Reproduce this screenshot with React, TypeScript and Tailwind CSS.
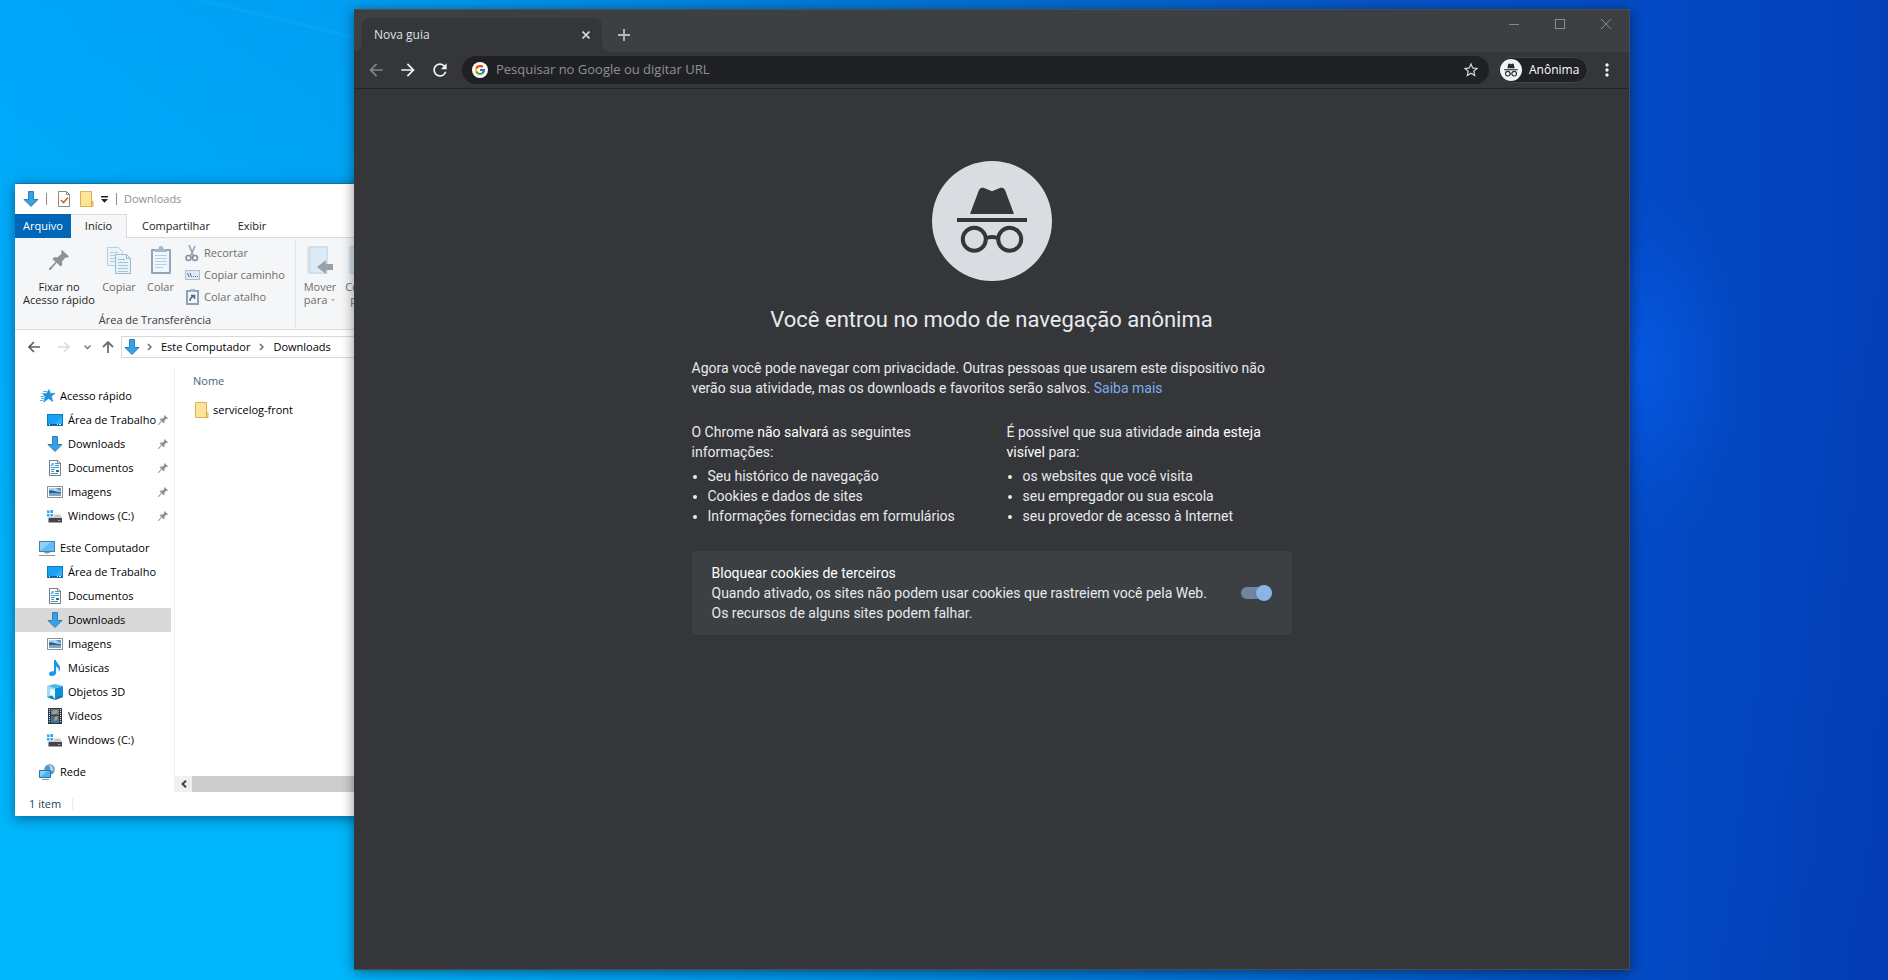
import React from "react";
import { FcGoogle } from "react-icons/fc";
import { MdArrowBack, MdArrowForward, MdRefresh, MdStarBorder, MdMoreVert } from "react-icons/md";

/* ---------- Desktop wallpaper ---------- */

function Wallpaper() {
  return (
    <svg className="absolute inset-0 h-full w-full" preserveAspectRatio="none" viewBox="0 0 1888 980" aria-hidden="true">
      <defs>
        <linearGradient id="base" x1="0" y1="0" x2="1" y2="0">
          <stop offset="0" stopColor="#00a6f9" />
          <stop offset="0.18" stopColor="#009ff3" />
          <stop offset="0.4" stopColor="#007fdc" />
          <stop offset="0.7" stopColor="#0558c8" />
          <stop offset="0.87" stopColor="#034ac4" />
          <stop offset="1" stopColor="#0340b8" />
        </linearGradient>
        <linearGradient id="low" x1="0" y1="0" x2="0" y2="1">
          <stop offset="0" stopColor="#00b6fb" stopOpacity="0" />
          <stop offset="0.8" stopColor="#00b6fb" stopOpacity="1" />
        </linearGradient>
        <linearGradient id="foot" x1="0" y1="0" x2="1" y2="0">
          <stop offset="0" stopColor="#00b2f9" />
          <stop offset="0.4" stopColor="#008fe4" />
          <stop offset="1" stopColor="#034ac2" />
        </linearGradient>
        <linearGradient id="rim" x1="0" y1="0" x2="1" y2="1">
          <stop offset="0.6" stopColor="#0338ae" stopOpacity="0" />
          <stop offset="1" stopColor="#0338ae" stopOpacity="0.5" />
        </linearGradient>
        <radialGradient id="glow">
          <stop offset="0" stopColor="#0559e2" />
          <stop offset="0.5" stopColor="#0553d8" stopOpacity="0.6" />
          <stop offset="1" stopColor="#034ec8" stopOpacity="0" />
        </radialGradient>
      </defs>
      <rect width="1888" height="980" fill="url(#base)" />
      <rect width="360" height="980" fill="url(#low)" />
      <rect x="360" y="900" width="1270" height="80" fill="url(#foot)" />
      <rect x="1620" width="268" height="980" fill="url(#rim)" />
      <ellipse cx="1636" cy="365" rx="120" ry="190" fill="url(#glow)" />
      <path d="M185 -2 L356 40 L356 36 L200 -2Z" fill="#18adfa" opacity="0.35" />
    </svg>
  );
}

/* ---------- Explorer icons ---------- */

function DownArrow() {
  return (
    <svg width="16" height="16" viewBox="0 0 16 16" className="shrink-0" aria-hidden="true">
      <path d="M5.500 .5h5v8h4.500L8 15.500 1 8.500h4.500z" fill="#39a0e4" stroke="#2c7fbd" />
    </svg>
  );
}

function FolderIcon() {
  return (
    <svg width="14" height="16" viewBox="0 0 14 16" className="shrink-0" aria-hidden="true">
      <path d="M.5 .5h11v9l1.500 1v5H.5z" fill="#fbe59b" stroke="#e3b04b" />
      <path d="M11.500 15.500v-5.500" fill="none" stroke="#e3a93f" />
    </svg>
  );
}

function StarIcon() {
  return (
    <svg width="16" height="16" viewBox="0 0 16 16" className="shrink-0" aria-hidden="true">
      <path d="M10 1.500l1.300 3.900H16l-3.700 2.800 1.500 5.300L9.500 10.400 4.700 14l1.600-5.400L4 5.700l3.800-.3z" fill="#1f93e0" stroke="#1b7fc8" strokeWidth=".6" />
      <path d="M4 3.500h4M2.500 5.500h4M1.500 8.500h4M2 10.500h3M1 12.500h3" stroke="#4bb5f3" />
    </svg>
  );
}

function DesktopIcon() {
  return (
    <svg width="16" height="16" viewBox="0 0 16 16" className="shrink-0" aria-hidden="true">
      <rect x=".5" y="2.500" width="15" height="11" fill="#19a0f0" stroke="#0b78bf" />
      <path d="M7 12L15 4v8z" fill="#30aef6" />
      <path d="M1 12.500h14" stroke="#0c5d95" />
      <path d="M2 12.500h1M10 12.500h1M12 12.500h2" stroke="#d6f0ff" />
    </svg>
  );
}

function DocumentIcon() {
  return (
    <svg width="16" height="16" viewBox="0 0 16 16" className="shrink-0" aria-hidden="true">
      <path d="M2.500 .5h8.500l2.500 2.500v12.500h-11z" fill="#fff" stroke="#7b8086" />
      <path d="M10.500 .5v3h3" fill="none" stroke="#7b8086" />
      <path d="M4 6l2-3v3M4 7.500h8M4 9.500h4M4 11.500h3M4 13.500h7" fill="none" stroke="#3a9bd9" />
      <path d="M8 3.500h2M8 5.500h4" stroke="#3a9bd9" />
      <rect x="9" y="10" width="3" height="2" fill="#2f6690" />
    </svg>
  );
}

function PictureIcon() {
  return (
    <svg width="16" height="16" viewBox="0 0 16 16" className="shrink-0" aria-hidden="true">
      <rect x=".5" y="2.500" width="15" height="11" fill="#fff" stroke="#8d9297" />
      <rect x="2" y="4" width="12" height="8" fill="#a9d3f0" />
      <path d="M9 4h5v3c-2 0-3-1-5-3z" fill="#4d9fdd" />
      <path d="M2 6.500c3-1 5 1.500 12 1.500v1.500H2z" fill="#345b80" />
      <path d="M2 9.500h12V12H2z" fill="#7fa6c6" />
    </svg>
  );
}

function DriveIcon() {
  return (
    <svg width="16" height="16" viewBox="0 0 16 16" className="shrink-0" aria-hidden="true">
      <path d="M0 2.500h2.500V5H0zM3.500 2H6v3H3.500zM0 6h2.500v2.500H0zM3.500 6H6v2.500H3.500z" fill="#1aabf2" />
      <path d="M7 6.500h6L15 10H1.500v-1H7z" fill="#c9cbcd" />
      <path d="M1.500 10H15v4.500H1.500z" fill="#414548" />
      <path d="M11 12.500h2.500" stroke="#9aa0a4" />
    </svg>
  );
}

function ComputerIcon() {
  return (
    <svg width="16" height="16" viewBox="0 0 16 16" className="shrink-0" aria-hidden="true">
      <rect x=".5" y="1.500" width="15" height="10" fill="#63bdf5" stroke="#3d84b8" />
      <path d="M1 11L12 2H1z" fill="#8ed2fb" />
      <path d="M5 12.500h6M0 15.500h16" stroke="#8e979e" />
      <path d="M7 13.500h2" stroke="#b8c0c5" />
    </svg>
  );
}

function MusicIcon() {
  return (
    <svg width="16" height="16" viewBox="0 0 16 16" className="shrink-0" aria-hidden="true">
      <path d="M7 0h2c.2 3 4.500 4.500 4 9-.1 1.200-.7 2-1.300 2.800.6-3-.7-4.300-2.700-5.300V13c0 2-2 3-3.800 3S2 15.200 2 13.700C2 12 4 10.800 7 11.300z" fill="#1499ec" />
    </svg>
  );
}

function CubeIcon() {
  return (
    <svg width="16" height="16" viewBox="0 0 16 16" className="shrink-0" aria-hidden="true">
      <path d="M0 2l8-2 8 2-8 2.500z" fill="#4fb7e8" />
      <path d="M0 2l8 2.500V16l-8-3z" fill="#9edcf5" />
      <path d="M16 2L8 4.500V16l8-3z" fill="#0f8fd6" />
      <path d="M3 5l5 1v7l-5-1.500z" fill="#e8f7fd" />
      <path d="M0 13l5-1.500 3 4.500zM16 13l-5-1.500L8 16z" fill="#2173b0" />
    </svg>
  );
}

function VideoIcon() {
  return (
    <svg width="16" height="16" viewBox="0 0 16 16" className="shrink-0" aria-hidden="true">
      <rect x="1" y="0" width="14" height="16" fill="#33373b" />
      <rect x="4" y="1" width="8" height="6" fill="#4d86ad" />
      <rect x="4" y="8" width="8" height="7" fill="#3576a8" />
      <path d="M5 4l4-2 2 1-1 2-4 1zM8 9l3-1-1 4-3 1z" fill="#d79a45" />
      <path d="M2.500 1v14M13.500 1v14" stroke="#e8eaec" strokeDasharray="1 1" />
    </svg>
  );
}

function NetworkIcon() {
  return (
    <svg width="16" height="16" viewBox="0 0 16 16" className="shrink-0" aria-hidden="true">
      <circle cx="10.500" cy="5.500" r="5.300" fill="#5b97c4" />
      <path d="M9 1c2 1 3 3 2 5l4 1-2-5z" fill="#b9dcf2" />
      <path d="M.5 6.500h11v7H.5z" fill="#4db2f0" stroke="#2877af" />
      <path d="M1 13l8-6H1z" fill="#83cdf8" />
      <path d="M3 15.500h7" stroke="#8e979e" />
    </svg>
  );
}

function PinIcon({ size }: { size: number }) {
  return (
    <svg width={size} height={size} viewBox="0 0 20 20" className="shrink-0" aria-hidden="true">
      <path d="M13 0l7 6.500-2 1.300-1.500-.3-3.500 4 .3 3.500-1.800 1.500-3.800-3.700L1.500 20 0 20v-1.500l6.500-6.400L3.500 9 5 7.200l3.700.1L12.800 3.500 12 1.500z" fill="#8b929b" />
    </svg>
  );
}

/* ---------- Explorer window ---------- */

type NavItem = { label: string; icon: React.ReactNode; pinned?: boolean; selected?: boolean };
type NavGroup = { label: string; icon: React.ReactNode; items: NavItem[] };

const navGroups: NavGroup[] = [
  {
    label: "Acesso rápido",
    icon: <StarIcon />,
    items: [
      { label: "Área de Trabalho", icon: <DesktopIcon />, pinned: true },
      { label: "Downloads", icon: <DownArrow />, pinned: true },
      { label: "Documentos", icon: <DocumentIcon />, pinned: true },
      { label: "Imagens", icon: <PictureIcon />, pinned: true },
      { label: "Windows (C:)", icon: <DriveIcon />, pinned: true },
    ],
  },
  {
    label: "Este Computador",
    icon: <ComputerIcon />,
    items: [
      { label: "Área de Trabalho", icon: <DesktopIcon /> },
      { label: "Documentos", icon: <DocumentIcon /> },
      { label: "Downloads", icon: <DownArrow />, selected: true },
      { label: "Imagens", icon: <PictureIcon /> },
      { label: "Músicas", icon: <MusicIcon /> },
      { label: "Objetos 3D", icon: <CubeIcon /> },
      { label: "Vídeos", icon: <VideoIcon /> },
      { label: "Windows (C:)", icon: <DriveIcon /> },
    ],
  },
  { label: "Rede", icon: <NetworkIcon />, items: [] },
];

function NavPane() {
  return (
    <nav className="w-[160px] shrink-0 space-y-2 border-r border-[#f0f0f0] pt-4 pr-[3px]">
      {navGroups.map((group) => (
        <div key={group.label}>
          <button className="flex h-6 w-full items-center gap-[5px] pl-6 text-left">
            {group.icon}
            {group.label}
          </button>
          {group.items.map((item) => (
            <button
              key={item.label}
              className={
                item.selected
                  ? "flex h-6 w-full items-center gap-[5px] bg-[#d9d9d9] pl-8 text-left"
                  : "flex h-6 w-full items-center gap-[5px] pl-8 text-left"
              }
            >
              {item.icon}
              <span className="min-w-0 flex-1 whitespace-nowrap">{item.label}</span>
              {item.pinned && (
                <span className="-ml-2 pr-[3px]">
                  <PinIcon size={10} />
                </span>
              )}
            </button>
          ))}
        </div>
      ))}
    </nav>
  );
}

function CopyArt() {
  return (
    <svg width="26" height="29" viewBox="0 0 26 29" aria-hidden="true">
      <path d="M1.500 1.500h11l4 4v14h-15z" fill="#eaf4fb" stroke="#b4cfe0" />
      <path d="M4 6.500h8M4 9.500h10M4 12.500h10M4 15.500h10" stroke="#b4cfe0" />
      <path d="M9.500 8.500h11l4 4v15h-15z" fill="#e6f3fb" stroke="#9fb9cc" />
      <path d="M20.500 8.500v4h4" fill="none" stroke="#9fb9cc" />
      <path d="M12 13.500h7M12 16.500h10M12 19.500h10M12 22.500h10M12 25.500h10" stroke="#a5c4d9" />
    </svg>
  );
}

function PasteArt() {
  return (
    <svg width="22" height="30" viewBox="0 0 22 30" aria-hidden="true">
      <rect x="1" y="4" width="20" height="25" rx="1" fill="#92a5b8" />
      <rect x="3" y="6" width="16" height="21" fill="#edf7fd" />
      <path d="M5 10.500h12M5 13.500h12M5 16.500h12M5 19.500h12M5 22.500h8" stroke="#b7cfdf" />
      <path d="M5 7V4h3.500c0-2 1-3 2.500-3s2.500 1 2.500 3H17v3z" fill="#a9b6c3" />
    </svg>
  );
}

function MoveArt() {
  return (
    <svg width="26" height="28" viewBox="0 0 26 28" aria-hidden="true">
      <path d="M0 0h21v28H0z" fill="#d6e5f0" />
      <path d="M3 1h17v26H3z" fill="#dcebf5" stroke="#c5d9e7" />
      <path d="M26 18v6h-7v4l-9-7 9-7v4z" fill="#9aa1a9" />
    </svg>
  );
}

function ScissorsArt() {
  return (
    <svg width="14" height="17" viewBox="0 0 14 17" fill="none" aria-hidden="true">
      <path d="M4 0l4.500 11M10 1L5.500 11" stroke="#98a3af" strokeWidth="1.600" />
      <circle cx="3.500" cy="13" r="2.500" stroke="#8791a0" strokeWidth="1.600" />
      <circle cx="10" cy="13" r="2.500" stroke="#8791a0" strokeWidth="1.600" />
    </svg>
  );
}

function PathArt() {
  return (
    <svg width="15" height="10" viewBox="0 0 15 10" fill="none" aria-hidden="true">
      <rect x=".5" y=".5" width="14" height="9" fill="#e0eaf4" stroke="#adc0d0" />
      <path d="M2.500 3l1.500 4M5 3l1.500 4M8 6.500h1M10 6.500h1M12 6.500h1" stroke="#5d6f80" />
    </svg>
  );
}

function ShortcutArt() {
  return (
    <svg width="13" height="16" viewBox="0 0 13 16" fill="none" aria-hidden="true">
      <rect x="1" y="2" width="11" height="13" fill="#edf6fc" stroke="#91a2b3" strokeWidth="2" />
      <path d="M4 0h5v3H4z" fill="#a9b6c3" />
      <path d="M4 12c0-3 1-4 4-5M5 6.500h3.500V10" stroke="#4e6882" strokeWidth="1.500" />
    </svg>
  );
}

function Ribbon() {
  return (
    <div className="flex h-[92px] border-b border-[#dadbdc] bg-[#f5f6f7] py-px text-[#6d6d6d]">
      <div className="flex w-[281px] shrink-0 flex-col border-r border-[#e2e3e4] pt-px">
        <div className="flex">
          <button className="flex w-[88px] flex-col items-center text-[#1f1f1f]">
            <span className="flex h-[40px] items-center">
              <PinIcon size={20} />
            </span>
            <span className="leading-[13px]">Fixar no<br />Acesso rápido</span>
          </button>
          <button className="flex w-[32px] flex-col items-center">
            <span className="flex h-[40px] items-center"><CopyArt /></span>
            <span className="leading-[13px]">Copiar</span>
          </button>
          <button className="ml-[7px] flex w-[37px] flex-col items-center">
            <span className="flex h-[40px] items-center"><PasteArt /></span>
            <span className="leading-[13px]">Colar</span>
          </button>
          <div className="ml-[5px] flex flex-col pt-[2px]">
            <button className="flex h-[22px] items-center gap-1">
              <span className="flex w-4 justify-center"><ScissorsArt /></span>
              Recortar
            </button>
            <button className="flex h-[22px] items-center gap-1 whitespace-nowrap">
              <span className="flex w-4 justify-center"><PathArt /></span>
              Copiar caminho
            </button>
            <button className="flex h-[22px] items-center gap-1">
              <span className="flex w-4 justify-center"><ShortcutArt /></span>
              Colar atalho
            </button>
          </div>
        </div>
        <div className="mt-auto text-center leading-4 text-[#3b3b3b]">Área de Transferência</div>
      </div>
      <button className="ml-[3px] flex w-[42px] shrink-0 flex-col items-center pt-px">
        <span className="flex h-[40px] items-center"><MoveArt /></span>
        <span className="leading-[13px]">
          Mover
          <br />
          para <svg width="6" height="4" className="inline pb-px" viewBox="0 0 6 4" aria-hidden="true"><path d="M0 0h6L3 3z" fill="#b5b5b5" /></svg>
        </span>
      </button>
      <button className="flex w-[42px] shrink-0 flex-col items-center pt-px">
        <span className="flex h-[40px] items-center"><MoveArt /></span>
        <span className="leading-[13px]">Copiar<br />para</span>
      </button>
    </div>
  );
}

function SmallChevron() {
  return (
    <svg width="5" height="8" viewBox="0 0 5 8" fill="none" aria-hidden="true">
      <path d="M1 1l3 3-3 3" stroke="#666" strokeWidth="1.400" />
    </svg>
  );
}

function Explorer() {
  return (
    <section
      aria-label="Explorador de Arquivos"
      className="absolute top-[183px] left-[15px] flex w-[400px] flex-col border-t border-[#1f6f9c] bg-white text-[11px] text-black shadow-[0_3px_12px_rgba(0,30,60,0.5)]"
    >
      <header className="flex h-[30px] items-center pl-2">
        <DownArrow />
        <span className="ml-[7px] h-3 w-px bg-[#8c8c8c]" />
        <button aria-label="Propriedades" className="ml-[10px]">
          <svg width="14" height="16" viewBox="0 0 14 16" fill="none" aria-hidden="true">
            <path d="M1.500 .5h8l3 3v12h-11z" fill="#fdfdfd" stroke="#87898c" />
            <path d="M9.500 .5v3h3" stroke="#87898c" />
            <path d="M4 9l2.500 2.500L11 6.500" stroke="#c56a2b" strokeWidth="1.600" />
          </svg>
        </button>
        <button aria-label="Nova pasta" className="ml-[9px]"><FolderIcon /></button>
        <button aria-label="Personalizar" className="ml-[7px]">
          <svg width="7" height="7" viewBox="0 0 7 7" aria-hidden="true">
            <path d="M0 0h7v1.500H0zM0 3h7L3.500 6.800z" fill="#222" />
          </svg>
        </button>
        <span className="ml-2 h-3 w-px bg-[#8c8c8c]" />
        <h2 className="ml-[7px] text-[#8f8f8f]">Downloads</h2>
      </header>

      <div className="flex h-6 items-stretch">
        <button className="w-[56px] bg-[#0066b8] text-white">Arquivo</button>
        <button className="w-[56px] border-t border-r border-[#dadbdc] bg-[#f5f6f7] text-[#222]">Início</button>
        <button className="w-[98px] border-b border-[#dadbdc] pt-px text-[#222]">Compartilhar</button>
        <button className="w-[54px] border-b border-[#dadbdc] pt-px text-[#222]">Exibir</button>
        <span className="flex-1 border-b border-[#dadbdc]" />
      </div>

      <Ribbon />

      <div className="flex h-[38px] items-start pt-[6px]">
        <div className="flex h-[22px] w-[106px] shrink-0 items-center pl-[13px]">
          <button aria-label="Voltar">
            <svg width="12" height="12" viewBox="0 0 12 12" fill="none" aria-hidden="true"><path d="M12 6H1M6 1L1 6l5 5" stroke="#5f5f63" strokeWidth="1.600" /></svg>
          </button>
          <button aria-label="Avançar" className="ml-[18px]">
            <svg width="12" height="12" viewBox="0 0 12 12" fill="none" aria-hidden="true"><path d="M0 6h11M6 1l5 5-5 5" stroke="#dcdcdc" strokeWidth="1.600" /></svg>
          </button>
          <button aria-label="Locais recentes" className="ml-[14px]">
            <svg width="7" height="5" viewBox="0 0 7 5" fill="none" aria-hidden="true"><path d="M.5 .5l3 3 3-3" stroke="#777" strokeWidth="1.400" /></svg>
          </button>
          <button aria-label="Acima" className="ml-[11px]">
            <svg width="12" height="12" viewBox="0 0 12 12" fill="none" aria-hidden="true"><path d="M6 12V1M1 6l5-5 5 5" stroke="#707074" strokeWidth="1.800" /></svg>
          </button>
        </div>
        <div className="flex h-[22px] flex-1 items-center border border-[#d9d9d9] pl-[2px]">
          <DownArrow />
          <span className="ml-[7px]"><SmallChevron /></span>
          <button className="ml-[9px] whitespace-nowrap">Este Computador</button>
          <span className="ml-[9px]"><SmallChevron /></span>
          <button className="ml-[9px]">Downloads</button>
        </div>
      </div>

      <div className="flex h-[424px]">
        <NavPane />
        <div className="flex flex-1 flex-col justify-between">
          <table className="mt-[3px] w-full border-collapse text-left">
            <thead>
              <tr className="h-5">
                <th className="py-0 pl-[18px] font-normal text-[#4c6077]">Nome</th>
              </tr>
            </thead>
            <tbody>
              <tr className="h-[38px]">
                <td className="py-0 pl-5">
                  <span className="flex items-center gap-1">
                    <FolderIcon />
                    servicelog-front
                  </span>
                </td>
              </tr>
            </tbody>
          </table>
          <div className="flex h-[16px]">
            <button aria-label="Rolar para a esquerda" className="flex w-[17px] items-center justify-center bg-[#f0f0f0]">
              <svg width="6" height="8" viewBox="0 0 6 8" fill="none" aria-hidden="true"><path d="M5 .7L1.500 4 5 7.300" stroke="#3f3f46" strokeWidth="2" /></svg>
            </button>
            <span className="flex-1 bg-[#cdcdcd]" />
          </div>
        </div>
      </div>

      <footer className="flex h-6 items-center pl-[14px] text-[#24405f]">
        1 item
        <span className="ml-[11px] h-3 w-px bg-[#ececec]" />
      </footer>
    </section>
  );
}

/* ---------- Browser window ---------- */

function Spy({ className }: { className: string }) {
  return (
    <svg viewBox="0 0 120 120" className={className} aria-hidden="true">
      <circle cx="60" cy="60" r="60" fill="currentColor" />
      <g fill="#35363a">
        <path d="M38 53L47 29Q48.300 26 51.500 26.800L60 30.200 68.500 26.800Q71.700 26 73 29L82 53z" />
        <path d="M25 57h70v4H25z" />
      </g>
      <g fill="none" stroke="#35363a" strokeWidth="4">
        <circle cx="42.300" cy="78.300" r="11.500" />
        <circle cx="77.700" cy="78.300" r="11.500" />
        <path d="M53 77.500Q60 74.500 67 77.500" />
      </g>
    </svg>
  );
}

function SmallSpy() {
  return (
    <svg viewBox="0 0 24 24" className="h-[22px] w-[22px] shrink-0" aria-hidden="true">
      <circle cx="12" cy="12" r="12" fill="#f1f3f4" />
      <path d="M8 10l1-4.500q.3-.8 1.200-.5l1.800.6 1.800-.6q.9-.3 1.200.5L16 10z" fill="#292a2d" />
      <path d="M4.500 11.700h15" stroke="#292a2d" strokeWidth="1.200" />
      <g fill="none" stroke="#292a2d" strokeWidth="1.100">
        <circle cx="8.500" cy="16" r="2.500" />
        <circle cx="15.500" cy="16" r="2.500" />
        <path d="M11 16h2" />
      </g>
    </svg>
  );
}

function TabStrip() {
  return (
    <div className="flex h-[42px] items-end bg-[#3c4043]">
      <div className="relative ml-2 flex h-[34px] w-[240px] items-center rounded-t-lg bg-[#35363a] pr-3 pl-3">
        <span className="absolute bottom-0 -left-2 h-2 w-2 bg-[radial-gradient(circle_at_0_0,transparent_7px,#35363a_8px)]" />
        <span className="absolute -right-2 bottom-0 h-2 w-2 bg-[radial-gradient(circle_at_100%_0,transparent_7px,#35363a_8px)]" />
        <span className="flex-1 text-[12px] text-[#dfe1e5]">Nova guia</span>
        <button aria-label="Fechar guia">
          <svg width="8" height="8" viewBox="0 0 8 8" aria-hidden="true"><path d="M.5 .5l7 7M7.500 .5l-7 7" stroke="#d3d5d8" strokeWidth="1.700" /></svg>
        </button>
      </div>
      <button aria-label="Nova guia" className="mb-[11px] ml-4">
        <svg width="12" height="12" viewBox="0 0 12 12" aria-hidden="true"><path d="M6 0v12M0 6h12" stroke="#b4b8bd" strokeWidth="1.800" /></svg>
      </button>
      <div className="mb-[23px] ml-auto flex items-center gap-[36px] pr-[18px]">
        <button aria-label="Minimizar">
          <svg width="10" height="10" viewBox="0 0 10 10" aria-hidden="true"><path d="M0 5.500h10" stroke="#85888c" /></svg>
        </button>
        <button aria-label="Maximizar">
          <svg width="10" height="10" viewBox="0 0 10 10" aria-hidden="true"><rect x=".5" y=".5" width="9" height="9" fill="none" stroke="#85888c" /></svg>
        </button>
        <button aria-label="Fechar">
          <svg width="10" height="10" viewBox="0 0 10 10" aria-hidden="true"><path d="M0 0l10 10M10 0L0 10" stroke="#85888c" /></svg>
        </button>
      </div>
    </div>
  );
}

function Toolbar() {
  return (
    <div className="flex h-[37px] items-center border-b border-[#242528] bg-[#35363a] pl-3 text-[#f1f3f4]">
      <div className="flex gap-3">
        <button aria-label="Voltar" className="text-[#83868b]"><MdArrowBack size={20} /></button>
        <button aria-label="Avançar"><MdArrowForward size={20} /></button>
        <button aria-label="Recarregar"><MdRefresh size={20} /></button>
      </div>
      <div className="ml-3 flex h-7 flex-1 items-center rounded-full bg-[#202124] pr-[9px] pl-[10px]">
        <span className="flex h-4 w-4 items-center justify-center rounded-full bg-white"><FcGoogle size={12} /></span>
        <input
          aria-label="Barra de endereço"
          placeholder="Pesquisar no Google ou digitar URL"
          className="ml-2 flex-1 bg-transparent text-[13px] outline-none placeholder:text-[#8f9095]"
        />
        <button aria-label="Adicionar aos favoritos" className="text-[#d5d7da]"><MdStarBorder size={18} /></button>
      </div>
      <button className="ml-[9px] flex h-[26px] w-[90px] items-center gap-[7px] rounded-full border border-[#414347] bg-[#202124] pl-px text-[12px] font-medium text-white">
        <SmallSpy />
        Anônima
      </button>
      <button aria-label="Menu" className="mr-3 ml-[9px]"><MdMoreVert size={20} /></button>
    </div>
  );
}

function IncognitoPage() {
  return (
    <main className="flex flex-1 flex-col items-center overflow-hidden bg-[#35363a] pt-[72px] font-[Roboto,sans-serif] text-[14px] leading-5 text-[#e8eaed]">
      <Spy className="h-[120px] w-[120px] text-[#d9dce1]" />
      <div className="w-full max-w-[600px]">
        <h1 className="mt-[25px] text-center text-[22px] leading-7">Você entrou no modo de navegação anônima</h1>
        <p className="mt-6">
          Agora você pode navegar com privacidade. Outras pessoas que usarem este dispositivo não verão sua atividade,
          mas os downloads e favoritos serão salvos.{" "}
          <a href="#saiba-mais" className="text-[#7aaeea]">Saiba mais</a>
        </p>
        <div className="mt-6 flex gap-[30px]">
          <div className="flex-1">
            <p className="pr-10">
              O Chrome <strong className="font-normal text-white">não salvará</strong> as seguintes informações:
            </p>
            <ul className="mt-1 list-disc pl-4">
              <li>Seu histórico de navegação</li>
              <li>Cookies e dados de sites</li>
              <li>Informações fornecidas em formulários</li>
            </ul>
          </div>
          <div className="flex-1">
            <p className="pr-4">
              É possível que sua atividade <strong className="font-normal text-white">ainda esteja visível</strong> para:
            </p>
            <ul className="mt-1 list-disc pl-4">
              <li>os websites que você visita</li>
              <li>seu empregador ou sua escola</li>
              <li>seu provedor de acesso à Internet</li>
            </ul>
          </div>
        </div>
        <div className="mt-[25px] flex items-center justify-between rounded bg-[#3c4043] px-5 py-3">
          <label htmlFor="block-cookies" className="max-w-[505px]">
            <span className="block text-white">Bloquear cookies de terceiros</span>
            Quando ativado, os sites não podem usar cookies que rastreiem você pela Web. Os recursos de alguns sites podem
            falhar.
          </label>
          <input
            id="block-cookies"
            type="checkbox"
            defaultChecked
            className="flex h-3 w-[31px] appearance-none items-center justify-end rounded-full bg-[#7384a3] before:h-4 before:w-4 before:rounded-full before:bg-[#8ab4e8] before:shadow-sm"
          />
        </div>
      </div>
    </main>
  );
}

function Browser() {
  return (
    <section
      aria-label="Navegador"
      className="absolute top-[9px] right-[258px] bottom-[10px] left-[354px] flex flex-col border-t border-r border-b border-[#4b4d50] bg-[#35363a] shadow-[0_2px_12px_rgba(0,0,0,0.45)]"
    >
      <TabStrip />
      <Toolbar />
      <IncognitoPage />
    </section>
  );
}

export default function App() {
  return (
    <div className="relative min-h-screen overflow-hidden bg-[#0078d7] font-['Open_Sans',sans-serif]">
      <Wallpaper />
      <Explorer />
      <Browser />
    </div>
  );
}
